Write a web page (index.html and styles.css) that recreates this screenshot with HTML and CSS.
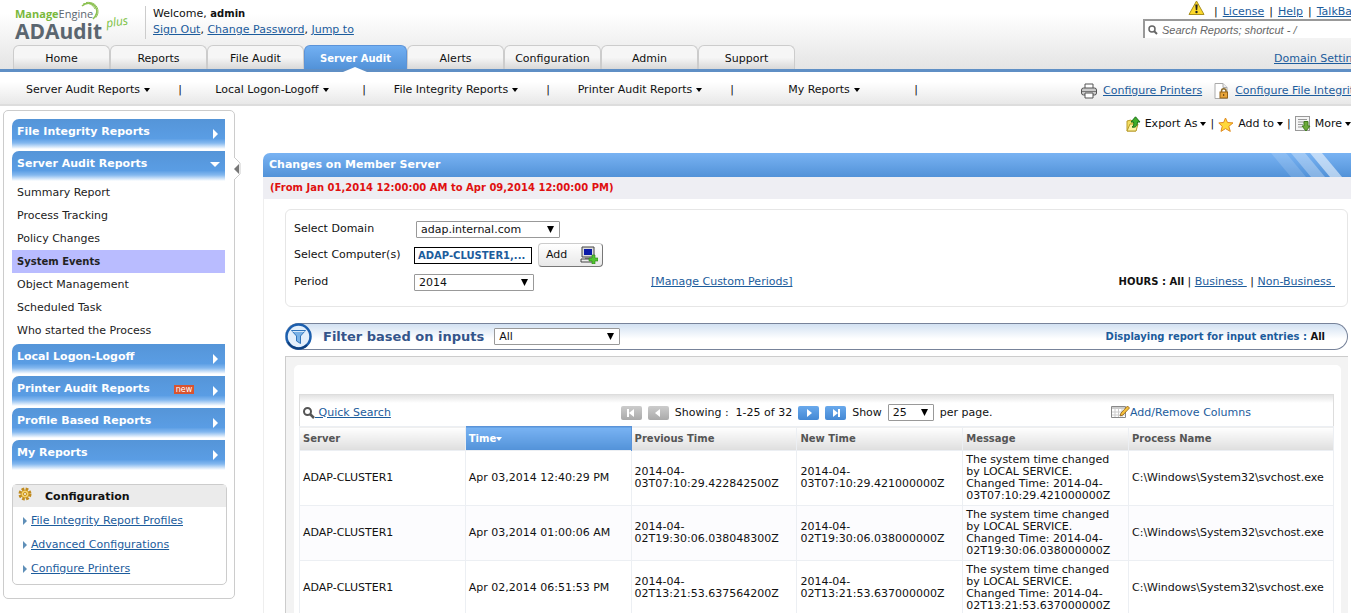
FILE: index.html
```html
<!DOCTYPE html>
<html lang="en">
<head>
  <meta charset="UTF-8">
  <title>ADAudit Plus</title>
  <link rel="stylesheet" href="styles.css">
</head>
<body>

  <header class="header">
    <div class="header-top">
      <div class="logo">
        <div class="logo-company"><b>Manage</b>Engine</div>
        <div class="logo-product">ADAudit</div>
        <span class="logo-plus">plus</span>
        <svg class="logo-arc" width="26" height="24" viewBox="0 0 26 24" fill="none" stroke="#8cc152">
          <path d="M4 5C8 1 15 1 18 7c2 4 1 7-3 11" stroke-width="1.500"/>
          <path d="M5 3c6-2 10 1 12 5M8 1.500c7-1 12 3 12 9 0 3-1 4-2 6" stroke-width="1"/>
        </svg>
      </div>
      <div class="welcome">
        <div>Welcome, <b>admin</b></div>
        <div><a href="#">Sign Out</a>, <a href="#">Change Password</a>, <a href="#">Jump to</a></div>
      </div>
    </div>

    <nav class="tabs">
      <a href="#">Home</a>
      <a href="#">Reports</a>
      <a href="#">File Audit</a>
      <a href="#" class="active">Server Audit</a>
      <a href="#">Alerts</a>
      <a href="#">Configuration</a>
      <a href="#">Admin</a>
      <a href="#">Support</a>
    </nav>

    <div class="header-side">
      <div class="quick-links">
        <svg width="17" height="16" viewBox="0 0 17 16">
          <path d="M8.500 1L16 14.500H1z" fill="#fbd82b" stroke="#a98f1c" stroke-linejoin="round"/>
          <path d="M7.300 4.500h2.400L9.200 10H7.800z" fill="#222"/>
          <circle cx="8.500" cy="12" r="1.200" fill="#222"/>
        </svg>
        <span>|</span><a href="#">License</a><span>|</span><a href="#">Help</a><span>|</span><a href="#">TalkBack</a>
      </div>
      <label class="search">
        <svg width="10" height="10" viewBox="0 0 10 10" fill="none" stroke="#666">
          <circle cx="4" cy="4" r="3" stroke-width="1.500"/><path d="M6 6l3 3" stroke-width="2"/>
        </svg>
        <input type="text" placeholder="Search Reports; shortcut - /" aria-label="Search Reports">
      </label>
      <a href="#" class="domain-link">Domain Settings</a>
    </div>
  </header>

  <!-- sub menu of the active tab -->
  <div class="subnav">
    <nav class="subnav-menu">
      <button>Server Audit Reports<i class="caret"></i></button><span>|</span>
      <button>Local Logon-Logoff<i class="caret"></i></button><span>|</span>
      <button>File Integrity Reports<i class="caret"></i></button><span>|</span>
      <button>Printer Audit Reports<i class="caret"></i></button><span>|</span>
      <button>My Reports<i class="caret"></i></button><span>|</span>
    </nav>
    <div class="subnav-side">
      <svg width="16" height="16" viewBox="0 0 16 16" stroke="#555">
        <path d="M4 5V1h8v4" fill="#fff"/>
        <rect x=".5" y="5" width="15" height="7" rx="2" fill="#ccc"/>
        <path d="M1 8.500h14" stroke="#777"/>
        <path d="M4 10h8v5H4z" fill="#fff"/>
      </svg>
      <a href="#">Configure Printers</a>
      <svg class="file-icon" width="15" height="16" viewBox="0 0 15 16">
        <path d="M1 .5h8l4 4V15.500H1z" fill="#fff" stroke="#aaa"/>
        <path d="M9 .5v4h4" fill="#eee" stroke="#aaa"/>
        <path d="M7.500 9V8a2 2 0 0 1 4.500 0v1" fill="none" stroke="#8a6a2a" stroke-width="1.500"/>
        <rect x="6" y="9" width="7.500" height="6" fill="#e9a53a" stroke="#93641a"/>
        <path d="M9.700 11v2" stroke="#5c3d0c"/>
      </svg>
      <a href="#">Configure File Integrity</a>
    </div>
  </div>

  <div class="layout">
    <aside class="sidebar">
      <button class="collapse" aria-label="Collapse">
        <svg width="7" height="24" viewBox="0 0 7 24"><path d="M0 0l6 6v11l-6 6" fill="#fff" stroke="#ccc"/><path d="M5 7v10L0 12z" fill="#777"/></svg>
      </button>
      <a href="#" class="menu-head">File Integrity Reports<i class="arrow-right"></i></a>
      <a href="#" class="menu-head">Server Audit Reports<i class="arrow-down"></i></a>
      <ul class="menu-items">
        <li><a href="#">Summary Report</a></li>
        <li><a href="#">Process Tracking</a></li>
        <li><a href="#">Policy Changes</a></li>
        <li><a href="#" class="selected">System Events</a></li>
        <li><a href="#">Object Management</a></li>
        <li><a href="#">Scheduled Task</a></li>
        <li><a href="#">Who started the Process</a></li>
      </ul>
      <a href="#" class="menu-head">Local Logon-Logoff<i class="arrow-right"></i></a>
      <a href="#" class="menu-head">Printer Audit Reports<span class="new">new</span><i class="arrow-right"></i></a>
      <a href="#" class="menu-head">Profile Based Reports<i class="arrow-right"></i></a>
      <a href="#" class="menu-head">My Reports<i class="arrow-right"></i></a>

      <section class="config">
        <h2>
          <svg width="14" height="14" viewBox="0 0 14 14">
            <circle cx="7" cy="7" r="5" fill="none" stroke="#c08a1e" stroke-width="3" stroke-dasharray="2.600 1.330"/>
            <circle cx="7" cy="7" r="4" fill="#f6d368" stroke="#c08a1e" stroke-width=".8"/>
            <circle cx="7" cy="7" r="1.500" fill="#fff" stroke="#c08a1e"/>
          </svg>
          Configuration
        </h2>
        <ul>
          <li><a href="#">File Integrity Report Profiles</a></li>
          <li><a href="#">Advanced Configurations</a></li>
          <li><a href="#">Configure Printers</a></li>
        </ul>
      </section>
    </aside>

    <main class="main">
      <div class="actions">
        <svg width="15" height="16" viewBox="0 0 15 16">
          <path d="M1 5l4-1 1 1h4v10H1z" fill="#f5df62" stroke="#b99c2a"/>
          <path d="M1 15l3-7h8l-2 7z" fill="#fdf3a0" stroke="#b99c2a"/>
          <path d="M6 11c2-1 2-3 1.500-5H5L9.500.8 14 6h-2.500c0 4-2 6-5.500 5z" fill="#3fae2a" stroke="#1d6f18"/>
        </svg>
        <button>Export As<i class="caret"></i></button><span>|</span>
        <svg width="16" height="15" viewBox="0 0 16 15">
          <path d="M7.500 1l2 4.500 5.500.4-4.200 3.500 1.500 5-4.800-2.800L3 14.400l1.200-5L.8 5.900l4.800-.4z" fill="#ffd83a" stroke="#e08a1e" stroke-linejoin="round"/>
        </svg>
        <button>Add to<i class="caret"></i></button><span>|</span>
        <svg width="16" height="16" viewBox="0 0 16 16">
          <rect x=".5" y=".5" width="14" height="14" fill="#f5f5f5" stroke="#999"/>
          <path d="M3 3.500h9M3 6h6M3 8.500h5M3 11h4" stroke="#999"/>
          <path d="M9 5.500h4V10h2l-4 5-4-5h2z" fill="#6da93a" stroke="#3f7a1c"/>
        </svg>
        <button>More<i class="caret"></i></button>
      </div>

      <section class="panel">
        <h1>
          Changes on Member Server
          <svg width="80" height="24" viewBox="0 0 80 24" fill="#fff">
            <path d="M0 0h15l20 24H20z" opacity=".15"/>
            <path d="M20 0h14l20 24H40z" opacity=".3"/>
            <path d="M39 0h12l20 24H59z" opacity=".55"/>
          </svg>
        </h1>
        <p class="range">(From Jan 01,2014 12:00:00 AM to Apr 09,2014 12:00:00 PM)</p>

        <div class="panel-body">
          <form class="criteria">
            <label for="domain">Select Domain</label>
            <div><select id="domain" class="domain"><option>adap.internal.com</option></select></div>
            <label for="computers">Select Computer(s)</label>
            <div class="computers">
              <input type="text" id="computers" value="ADAP-CLUSTER1,..." readonly>
              <button type="button">Add
                <svg width="18" height="18" viewBox="0 0 18 18">
                  <path d="M2 1h12v10H2z" fill="#ddd" stroke="#444"/>
                  <path d="M4 3h8v6H4z" fill="#0b1aa8"/>
                  <path d="M5 11h6v2H5z" fill="#888"/>
                  <path d="M1 13h13v3H1z" fill="#eee" stroke="#444"/>
                  <path d="M12 9h3v3h3v3h-3v3h-3v-3H9v-3h3z" fill="#52c332" stroke="#2a8216" stroke-width=".6"/>
                </svg>
              </button>
            </div>
            <label for="period">Period</label>
            <div class="period">
              <select id="period"><option>2014</option></select>
              <a href="#">[Manage Custom Periods]</a>
              <div class="hours"><b>HOURS : All</b> | <a href="#">Business&nbsp;</a> | <a href="#">Non-Business&nbsp;</a></div>
            </div>
          </form>

          <div class="filter">
            <svg width="27" height="27" viewBox="0 0 27 27">
              <circle cx="13.500" cy="13.500" r="12" fill="#e3effb" stroke="#1c5fae" stroke-width="2.500"/>
              <path d="M3 19a12 12 0 0 0 19 3" fill="none" stroke="#0d3f7e" stroke-width="2"/>
              <path d="M6.500 7.500h14L15.500 13v7.500l-4-2.500v-5z" fill="#7ab2e6" stroke="#2f74bb"/>
              <path d="M7.500 8.500h12" stroke="#d6e9fa"/>
            </svg>
            <label for="filter">Filter based on inputs</label>
            <select id="filter"><option>All</option></select>
            <p>Displaying report for input entries : <b>All</b></p>
          </div>

          <div class="report">
            <div class="report-inner">
              <div class="table-bar">
                <a href="#" class="quick-search">
                  <svg width="12" height="12" viewBox="0 0 12 12" fill="none" stroke="#555">
                    <circle cx="4.500" cy="4.500" r="3.500" stroke-width="2"/><path d="M7 7l4 4" stroke-width="2.500"/>
                  </svg><span>&nbsp;Quick Search</span></a>
                <div class="pager">
                  <button class="off" aria-label="First page"><svg width="10" height="8" viewBox="0 0 10 8" fill="#fff"><path d="M1 0h2v8H1zM8 0v8L3 4z"/></svg></button>
                  <button class="off" aria-label="Previous page"><svg width="10" height="8" viewBox="0 0 10 8" fill="#fff"><path d="M7 0v8L2 4z"/></svg></button>
                  <span>Showing :&nbsp; 1-25 of 32</span>
                  <button aria-label="Next page"><svg width="10" height="8" viewBox="0 0 10 8" fill="#fff"><path d="M3 0v8l5-4z"/></svg></button>
                  <button aria-label="Last page"><svg width="10" height="8" viewBox="0 0 10 8" fill="#fff"><path d="M7 0h2v8H7zM2 0v8l5-4z"/></svg></button>
                  <label for="pagesize">Show</label>
                  <select id="pagesize"><option>25</option></select>
                  <span>per page.</span>
                </div>
                <a href="#" class="columns">
                  <svg width="19" height="14" viewBox="0 0 19 14">
                    <path d="M.5 1.500h14v11H.5z" fill="#fff" stroke="#888"/>
                    <path d="M1 3h13" stroke="#999"/>
                    <path d="M1 7h13M1 10h13M4 3v9M7.500 3v9M11 3v9" stroke="#ccc"/>
                    <path d="M9 11l1-3 6.500-7 2 2L12 10z" fill="#f5c13c" stroke="#8a5a14" stroke-width=".8"/>
                  </svg>Add/Remove Columns</a>
              </div>

              <table>
                <thead>
                  <tr>
                    <th>Server</th>
                    <th class="sorted">Time<i class="caret"></i></th>
                    <th>Previous Time</th>
                    <th>New Time</th>
                    <th>Message</th>
                    <th class="process">Process Name</th>
                  </tr>
                </thead>
                <tbody>
                  <tr>
                    <td>ADAP-CLUSTER1</td>
                    <td>Apr 03,2014 12:40:29 PM</td>
                    <td>2014-04-<br>03T07:10:29.422842500Z</td>
                    <td>2014-04-<br>03T07:10:29.421000000Z</td>
                    <td>The system time changed<br>by LOCAL SERVICE.<br>Changed Time: 2014-04-<br>03T07:10:29.421000000Z</td>
                    <td>C:\Windows\System32\svchost.exe</td>
                  </tr>
                  <tr>
                    <td>ADAP-CLUSTER1</td>
                    <td>Apr 03,2014 01:00:06 AM</td>
                    <td>2014-04-<br>02T19:30:06.038048300Z</td>
                    <td>2014-04-<br>02T19:30:06.038000000Z</td>
                    <td>The system time changed<br>by LOCAL SERVICE.<br>Changed Time: 2014-04-<br>02T19:30:06.038000000Z</td>
                    <td>C:\Windows\System32\svchost.exe</td>
                  </tr>
                  <tr>
                    <td>ADAP-CLUSTER1</td>
                    <td>Apr 02,2014 06:51:53 PM</td>
                    <td>2014-04-<br>02T13:21:53.637564200Z</td>
                    <td>2014-04-<br>02T13:21:53.637000000Z</td>
                    <td>The system time changed<br>by LOCAL SERVICE.<br>Changed Time: 2014-04-<br>02T13:21:53.637000000Z</td>
                    <td>C:\Windows\System32\svchost.exe</td>
                  </tr>
                </tbody>
              </table>
            </div>
          </div>
        </div>
      </section>
    </main>
  </div>

</body>
</html>
```

FILE: styles.css
```css
* {
  box-sizing: border-box;
}

body {
  margin: 0;
  overflow: hidden;
  background: #fff;
  color: #111;
  font-family: Verdana, 'DejaVu Sans', sans-serif;
  font-size: 11px;
  line-height: 16px;
}

a {
  color: #1c5c9c;
}

svg {
  flex: none;
}

button,
input,
select {
  font: inherit;
  color: inherit;
}

button {
  padding: 0;
  border: none;
  background: none;
  white-space: nowrap;
  cursor: pointer;
}

ul {
  margin: 0;
  padding: 0;
  list-style: none;
}

select {
  appearance: none;
  height: 17px;
  padding: 0 4px;
  border: 1px solid #999;
  border-radius: 1px;
  line-height: 15px;
  background: #fff url("data:image/svg+xml,%3Csvg xmlns='http://www.w3.org/2000/svg' width='7' height='7'%3E%3Cpath d='M0 0h7L3.5 7z'/%3E%3C/svg%3E") no-repeat right 5px center;
}

.caret {
  display: inline-block;
  margin-left: 4px;
  border: 3px solid transparent;
  border-top: 4px solid #000;
  border-bottom: 0;
  vertical-align: 1px;
}

/* header */
.header {
  display: grid;
  grid-template-columns: 1fr 208px;
  grid-template-rows: 45px 24px;
  border-bottom: 3px solid #5f8fc5;
  background: linear-gradient(#fff 20%, #e4e4e4);
}

.header-top {
  display: flex;
}

.logo {
  position: relative;
  width: 145px;
  padding: 7px 0 0 15px;
  font-family: 'Open Sans', sans-serif;
  color: #5b6670;
}

.logo-company {
  font-size: 11px;
  line-height: 14px;
}

.logo-company b {
  color: #7ab83c;
}

.logo-product {
  font-size: 21px;
  font-weight: bold;
  line-height: 20px;
}

.logo-plus {
  position: absolute;
  top: 14px;
  left: 106px;
  color: #7ac143;
  font-size: 12px;
  font-style: italic;
  transform: rotate(-8deg);
}

.logo-arc {
  position: absolute;
  top: 1px;
  left: 78px;
}

.welcome {
  height: 33px;
  margin-top: 6px;
  padding-left: 7px;
  border-left: 1px solid #ccc;
}

.welcome b {
  font-size: 10px;
}

.tabs {
  grid-row: 2;
  display: flex;
  padding-left: 13px;
}

.tabs a {
  width: 97px;
  border: 1px solid #ccc;
  border-bottom: 0;
  border-radius: 6px 6px 0 0;
  background: linear-gradient(#f6f6f6 50%, #d8d8d8);
  color: #111;
  line-height: 26px;
  text-align: center;
  text-decoration: none;
}

.tabs .active {
  position: relative;
  width: 103px;
  border-color: #5b93d8;
  background: linear-gradient(#72b0f3, #5292d8);
  color: #fff;
  font-size: 10px;
  font-weight: bold;
}

.tabs .active::after {
  content: '';
  position: absolute;
  left: 38px;
  bottom: -3px;
  border: 12px solid transparent;
  border-top: 0;
  border-bottom: 5px solid #fff;
}

.header-side {
  grid-column: 2;
  grid-row: 1 / 3;
  display: flex;
  flex-direction: column;
  overflow: hidden;
  white-space: nowrap;
}

.quick-links {
  display: flex;
  gap: 5px;
  height: 19px;
  padding-left: 45px;
  line-height: 24px;
}

.quick-links svg {
  margin-right: 4px;
}

.search {
  display: flex;
  align-items: center;
  gap: 4px;
  height: 19px;
  padding-left: 3px;
  border: 2px solid #999;
  border-width: 2px 0 0 2px;
  background: #fff;
}

.search input {
  flex: 1;
  height: 16px;
  padding: 0;
  border: 0;
  background: none;
  font: italic 11px 'Liberation Sans', Arial, sans-serif;
}

.search input::placeholder {
  color: #666;
}

.domain-link {
  padding: 13px 0 0 131px;
}

/* sub menu */
.subnav {
  display: flex;
  justify-content: space-between;
  height: 34px;
  padding-top: 3px;
  border-bottom: 2px solid #ddd;
  background: linear-gradient(#fff 30%, #e8e8e8);
  white-space: nowrap;
}

.subnav-menu {
  display: flex;
  align-items: center;
}

.subnav-menu button {
  width: 176px;
}

.subnav-menu span {
  width: 8px;
  text-align: center;
}

.subnav-side {
  display: flex;
  align-items: center;
  gap: 6px;
  width: 270px;
  padding-top: 2px;
  overflow: hidden;
}

.file-icon {
  margin-left: 6px;
}

/* page columns */
.layout {
  display: flex;
  align-items: flex-start;
  gap: 28px;
  padding: 4px 0 0 3px;
}

.sidebar {
  position: relative;
  flex: none;
  width: 232px;
  padding: 8px 7px 13px 8px;
  border: 1px solid #ccc;
  border-radius: 5px;
}

.collapse {
  position: absolute;
  top: 46px;
  right: -7px;
  height: 24px;
  line-height: 0;
}

.menu-head {
  display: flex;
  align-items: center;
  width: 213px;
  height: 30px;
  margin-bottom: 2px;
  padding: 0 7px 4px 5px;
  border-radius: 7px 0 0 0;
  background: linear-gradient(#5595d8, #5a9de4 65%, #84b8ef 80%, #fff);
  color: #fff;
  font-weight: bold;
  text-decoration: none;
}

.menu-head i {
  margin-left: auto;
}

.arrow-right {
  margin-top: 3px;
  border: 5px solid transparent;
  border-left-color: #fff;
  border-right: 0;
}

.menu-head .arrow-down {
  margin-right: -2px;
  border: 5px solid transparent;
  border-top-color: #fff;
  border-bottom: 0;
}

.new {
  margin-left: 24px;
  padding: 0 2px;
  background: #d9532f;
  font: 8px/9px 'DejaVu Sans', sans-serif;
}

.menu-items {
  width: 213px;
  margin: -2px 0 2px;
}

.menu-items a {
  display: block;
  padding-left: 5px;
  color: #222;
  line-height: 23px;
  text-decoration: none;
}

.menu-items .selected {
  background: #b9bcff;
  font-size: 10px;
  font-weight: bold;
}

.config {
  margin-top: 14px;
  padding-bottom: 3px;
  border: 1px solid #ccc;
  border-radius: 5px;
}

.config h2 {
  display: flex;
  gap: 13px;
  margin: 0 0 2px;
  padding: 2px 0 0 5px;
  background: #ebebeb;
  font-size: 11px;
  line-height: 20px;
}

.config li {
  display: flex;
  align-items: center;
  gap: 4px;
  padding-left: 10px;
  line-height: 24px;
}

.config li::before {
  content: '';
  border: 4px solid transparent;
  border-left-color: #5f8fb8;
  border-right: 0;
}

/* report page */
.main {
  flex: 1;
  min-width: 0;
}

.actions {
  display: flex;
  justify-content: flex-end;
  align-items: center;
  gap: 4px;
  height: 28px;
  margin-bottom: 15px;
}

.actions .caret {
  margin-left: 3px;
}

.panel h1 {
  display: flex;
  justify-content: space-between;
  height: 24px;
  margin: 0;
  padding-left: 6px;
  border-radius: 7px 0 0 0;
  background: linear-gradient(#79b3f3, #5292d8);
  color: #fff;
  font-size: 11px;
  line-height: 24px;
}

.range {
  margin: 0;
  padding-left: 7px;
  background: #eeeef3;
  color: #e01010;
  font-size: 10px;
  font-weight: bold;
  line-height: 22px;
}

.panel-body {
  padding: 10px 3px 0 21px;
  border-left: 1px solid #eee;
}

.criteria {
  display: grid;
  grid-template-columns: 120px 1fr;
  grid-template-rows: 26px 26px 28px;
  align-items: center;
  padding: 6px 12px 10px 8px;
  border: 1px solid #e6e6e6;
  border-radius: 6px;
}

.criteria .domain {
  width: 144px;
  margin-left: 2px;
}

.computers {
  display: flex;
  align-items: center;
  gap: 6px;
}

.computers input {
  width: 118px;
  height: 17px;
  padding: 0 3px;
  border: 1px solid #000;
  color: #1c5c9c;
  font-size: 10px;
  font-weight: bold;
}

.computers button {
  display: flex;
  align-items: center;
  justify-content: space-between;
  width: 65px;
  height: 24px;
  padding: 0 4px 0 7px;
  border: 1px solid #888;
  border-color: #ccc #777 #777 #ccc;
  border-radius: 4px;
  background: linear-gradient(#fff, #e8e8e8);
}

.period {
  display: flex;
  align-items: center;
}

.period select {
  width: 120px;
  margin-right: 117px;
}

.hours {
  margin-left: auto;
}

.hours b {
  font-size: 10px;
}

.filter {
  display: flex;
  align-items: center;
  height: 27px;
  margin: 16px 0 6px;
  padding-right: 22px;
  border: 1px solid #77839a;
  border-left: 0;
  border-radius: 14px;
  background: linear-gradient(#d2e1f2, #fff 60%);
}

.filter label {
  margin: 0 10px 0 11px;
  color: #34558b;
  font-size: 13px;
  font-weight: bold;
}

.filter select {
  width: 126px;
}

.filter p {
  margin: 0 0 0 auto;
  color: #1c5c9c;
  font-size: 10px;
  font-weight: bold;
}

.filter b {
  color: #111;
}

.report {
  padding: 8px 7px 0 8px;
  border: 1px solid #ccc;
  border-width: 1px 0 0 1px;
  background: #f3f3f3;
}

.report-inner {
  padding: 29px 7px 0 5px;
  border-radius: 5px 5px 0 0;
  background: #fff;
}

.table-bar {
  display: grid;
  grid-template-columns: 17fr auto 18fr;
  align-items: center;
  height: 32px;
  padding: 4px 4px 0 3px;
  border: 1px solid #ddd;
  border-bottom: 0;
  background: linear-gradient(#e2e2e2, #fff 8px);
}

.quick-search,
.pager {
  display: flex;
  align-items: center;
}

.pager {
  gap: 6px;
}

.pager button {
  width: 21px;
  height: 14px;
  border-radius: 2px;
  background: linear-gradient(#69a9ec, #4488d4);
  line-height: 0;
}

.pager .off {
  background: linear-gradient(#ccc, #aaa);
}

.pager select {
  width: 46px;
}

.columns {
  display: flex;
  justify-content: flex-end;
  padding-right: 78px;
  text-decoration: none;
}

table {
  width: 100%;
  table-layout: fixed;
  border-collapse: collapse;
}

th,
td {
  padding: 3px 0 3px 3px;
  border: 1px solid #eceff3;
  line-height: 12px;
  text-align: left;
  white-space: nowrap;
}

th {
  height: 24px;
  border-bottom: 0;
  background: linear-gradient(#fff, #dedede);
  color: #555;
  font-size: 10px;
}

.sorted {
  border-color: #5b93d8;
  background: linear-gradient(#79b3f3, #5292d8);
  color: #fff;
}

.sorted .caret {
  margin-left: 0;
  border-top-color: #fff;
}

.process {
  width: 205px;
}

tbody tr:nth-child(even) {
  background: #fcfcfe;
}
```
